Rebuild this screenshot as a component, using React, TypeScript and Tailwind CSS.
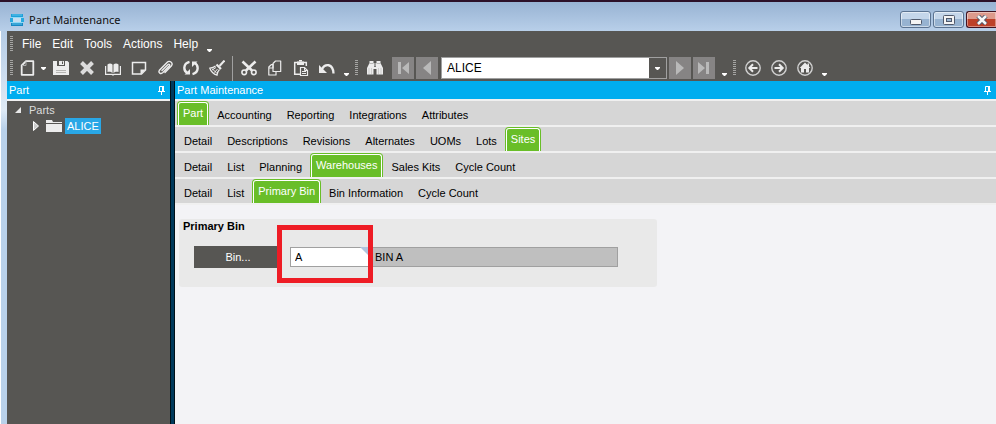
import type { ReactNode } from 'react'
import clsx from 'clsx'

const tabRows = [
	{
		label: 'Part sections',
		tabs: ['Part', 'Accounting', 'Reporting', 'Integrations', 'Attributes'],
		active: 'Part',
	},
	{
		label: 'Part views',
		tabs: ['Detail', 'Descriptions', 'Revisions', 'Alternates', 'UOMs', 'Lots', 'Sites'],
		active: 'Sites',
	},
	{
		label: 'Site views',
		tabs: ['Detail', 'List', 'Planning', 'Warehouses', 'Sales Kits', 'Cycle Count'],
		active: 'Warehouses',
	},
	{
		label: 'Warehouse views',
		tabs: ['Detail', 'List', 'Primary Bin', 'Bin Information', 'Cycle Count'],
		active: 'Primary Bin',
	},
]

const menus = ['File', 'Edit', 'Tools', 'Actions', 'Help']

function Icon({ children }: { children: ReactNode }) {
	return (
		<svg width="16" height="16" viewBox="0 0 16 16" fill="none" stroke="#ececec" strokeWidth="1.5" aria-hidden="true">
			{children}
		</svg>
	)
}

const icons = {
	new: (
		<Icon>
			<path d="M6 1.200h7.300v13.600H1.700V5.500L6 1.200z" strokeLinejoin="round" strokeWidth="1.800" />
			<path d="M2 5.500h4V1.500" strokeWidth="1" stroke="#aaa" />
		</Icon>
	),
	save: (
		<Icon>
			<path d="M0 1h4v5h8V1h2.500L16 2.500V15H0z" fill="#ececec" stroke="none" />
			<path d="M6 1h5v4H6z" fill="#ececec" stroke="none" />
			<path d="M9.500 1.500v2.500" stroke="#575653" strokeWidth="1" />
			<path d="M3 10.500h10M3 12.500h10" stroke="#b5b5b3" strokeWidth="1" />
		</Icon>
	),
	delete: (
		<Icon>
			<path d="M2.500 2.500l11 11M13.500 2.500l-11 11" stroke="#dcdcdc" strokeWidth="4" />
		</Icon>
	),
	book: (
		<Icon>
			<path d="M2.500 12V4.500C4 3 6 3 7.500 4.500V13C6 11.500 4 11.500 2.500 12z" fill="#ececec" stroke="none" />
			<path d="M13.500 12V4.500C12 3 10 3 8.500 4.500V13c1.500-1.500 3.500-1.500 5-1z" fill="#ececec" stroke="none" />
			<path d="M.6 6v8.400h6.400l1 .6 1-.6h6.400V6" strokeWidth="1.200" />
			<path d="M8 5v8.500" stroke="#b5b5b3" strokeWidth=".8" />
		</Icon>
	),
	note: (
		<Icon>
			<path d="M1.500 2.500h13v7.500l-4 4h-9z" />
			<path d="M14.500 9.500l-5 5v-5z" fill="#ececec" stroke="none" />
		</Icon>
	),
	clip: (
		<Icon>
			<path
				d="M5 10.500L11 4.500c1-.9 2.300.2 1.400 1.300l-6.500 6.800c-2 2-5 .2-3.500-2.300L10 2.400c2.500-2.400 6.500.2 4.500 3.300L8 12.500"
				strokeWidth="1.400"
				strokeLinecap="round"
			/>
		</Icon>
	),
	refresh: (
		<Icon>
			<path d="M6.500 1.800C-.2 3.500.2 11 4.500 13M9.500 14.200c6.700-1.700 6.300-9.200 2-11.200" strokeWidth="2.400" />
			<path d="M1.500 14.500h5.500V9zM14.500 1.500H9V7z" fill="#ececec" stroke="none" />
		</Icon>
	),
	broom: (
		<Icon>
			<path d="M15.500.5L10.500 6" strokeWidth="2" />
			<path d="M7.500 4.500l4.500 4.500" strokeWidth="2.200" />
			<path d="M6.500 6C5 7.500 3 8 .8 8.200 2 11.500 4.500 14 8 15.200c0-2.200 1-4.200 2.500-5.700" strokeWidth="1.200" />
			<path d="M7 7.500L3 10M8.500 9L5.500 12.500M3 8.500l5 5" strokeWidth="1" />
		</Icon>
	),
	cut: (
		<Icon>
			<path d="M1.500 1.500l9.500 9M14.500 1.500L5 10.500" strokeWidth="2.600" />
			<circle cx="3.200" cy="12.300" r="2.300" strokeWidth="1.600" />
			<circle cx="12.800" cy="12.300" r="2.300" strokeWidth="1.600" />
		</Icon>
	),
	copy: (
		<Icon>
			<path d="M8.500 1h5.200v10.500H6V3.500z" strokeWidth="1.200" strokeLinejoin="round" />
			<path d="M6 4.500H4.500L1.800 7v8H9v-3.500M6 4v4H2" strokeWidth="1.200" strokeLinejoin="round" />
		</Icon>
	),
	paste: (
		<Icon>
			<path d="M7 14.300H1.700V2.500h11.600V6" strokeWidth="1.500" />
			<path d="M4 1.500h7v3.500H4z" fill="#ececec" stroke="none" />
			<path d="M6 .7h3" />
			<path d="M7.500 7.500h4l3 3v5h-7z" strokeWidth="1.200" />
			<path d="M9 11.500h4M9 13.500h4M11.500 7.500v3h3" strokeWidth="1" />
		</Icon>
	),
	undo: (
		<Icon>
			<path d="M3 9C6 3.500 14 3 14.500 13.500" strokeWidth="2.300" />
			<path d="M0 5v8h8z" fill="#ececec" stroke="none" />
		</Icon>
	),
	search: (
		<Icon>
			<path d="M2.500 1h4v2h1v3h1V3h1V1h4v2l2.500 5v6.500H9.500V9h-3v5.500H0V8l2.500-5z" fill="#ececec" stroke="none" />
			<path d="M2.500 3.500h4M9.500 3.500h4" stroke="#aaa" strokeWidth=".8" />
			<path d="M2 8v6M4.500 8v6M11.500 8v6M14 8v6" stroke="#c2c2c0" strokeWidth=".7" />
			<path d="M7 6.500h2" stroke="#777" strokeWidth="1" />
		</Icon>
	),
	back: (
		<Icon>
			<circle cx="8" cy="8" r="7.200" stroke="#d0d0d0" strokeWidth="1.400" />
			<path d="M12.500 8H5M8 4.300L4.300 8 8 11.700" strokeWidth="2" />
		</Icon>
	),
	forward: (
		<Icon>
			<circle cx="8" cy="8" r="7.200" stroke="#d0d0d0" strokeWidth="1.400" />
			<path d="M3.500 8H11M8 4.300L11.700 8 8 11.700" strokeWidth="2" />
		</Icon>
	),
	home: (
		<Icon>
			<circle cx="8" cy="8" r="7.200" stroke="#d0d0d0" strokeWidth="1.400" />
			<path d="M8 2.500L2.700 8H4v4.500h3V9h2v3.500h3V8h1.300L12 6.500V3.500h-1.500V5z" fill="#ececec" stroke="none" />
		</Icon>
	),
}

function Grip() {
	return (
		<svg width="3" height="16" viewBox="0 0 3 16" className="shrink-0" aria-hidden="true">
			<path d="M1.500 0v16" stroke="#a5a5a3" strokeWidth="3" strokeDasharray="1 1" />
		</svg>
	)
}

function Caret() {
	return (
		<svg width="5" height="3" viewBox="0 0 5 3" className="shrink-0" aria-hidden="true">
			<path d="M0 0h5v1L3 3H2L0 1z" fill="#fff" />
		</svg>
	)
}

// Small arrow at the end of a bar that opens its overflow menu
function MoreButton({ label }: { label: string }) {
	return (
		<button type="button" aria-label={label} className="flex h-full w-3 shrink-0 items-end justify-center pb-1">
			<Caret />
		</button>
	)
}

function ToolButton({ label, icon }: { label: string; icon: ReactNode }) {
	return (
		<button
			type="button"
			aria-label={label}
			className="flex h-6 w-[26px] shrink-0 items-center justify-center hover:bg-white/10"
		>
			{icon}
		</button>
	)
}

function NavButton({ label, path }: { label: string; path: string }) {
	return (
		<button
			type="button"
			aria-label={label}
			disabled
			className="flex size-[22px] shrink-0 items-center justify-center bg-[#868484]"
		>
			<svg width="14" height="14" viewBox="0 0 14 14" fill="#b9b9b9" aria-hidden="true">
				<path d={path} />
			</svg>
		</button>
	)
}

function PaneHeader({ title }: { title: string }) {
	return (
		<div className="flex h-5 items-center justify-between border-b-2 border-[#f0f0f0] bg-[#00adef] pl-0.5 text-[11px] text-white">
			<h2>{title}</h2>
			<button type="button" aria-label={`Pin ${title}`} className="flex h-full w-4 items-center pl-1">
				<svg width="7" height="9" viewBox="0 0 7 9" fill="none" stroke="#fff" aria-hidden="true">
					<path d="M1.500 5V.5h3V5M0 5.500h7M3.500 6v3" />
					<path d="M5 0v5" strokeWidth="2" />
				</svg>
			</button>
		</div>
	)
}

function TitleBar() {
	const frame =
		'flex h-[17px] w-[31px] items-center justify-center rounded-[3px] border border-[#5b7391] bg-linear-to-b from-[#c4d6ea] from-50% to-[#97b3d1] to-50% inset-ring inset-ring-white/50'
	return (
		<header className="flex h-[31px] items-start justify-between border-t-2 border-[#2c1028] bg-linear-to-b from-[#98b3d3] to-[#b8cfe9]">
			<div className="flex items-center gap-1 pt-[10px] pl-[9px]">
				<svg width="16" height="16" viewBox="0 0 16 16" aria-hidden="true">
					<path d="M2 2h12v3H2z" fill="#1f9fd8" />
					<path d="M2 5h12v1H2z" fill="#8ed8f5" />
					<path d="M1 6h3v4H1zM12 6h3v4h-3z" fill="#27a9df" />
					<path d="M4 6h8v4H4z" fill="#c5ddf0" />
					<path d="M2 10h12v1H2z" fill="#8ed8f5" />
					<path d="M2 11h12v3H2z" fill="#1787c2" />
					<path d="M3 3h10M3 12h10" stroke="#5fc4ec" />
				</svg>
				<h1 className="font-['Noto_Sans','Open_Sans',sans-serif] text-[11px] leading-4 text-[#101010]">
					Part Maintenance
				</h1>
			</div>
			<div className="flex gap-0.5 pt-[9px]">
				<button type="button" aria-label="Minimize" className={frame}>
					<svg width="12" height="6" viewBox="0 0 12 6" className="mt-1" aria-hidden="true">
						<rect x=".5" y=".5" width="11" height="5" rx="1" fill="#f4f4f4" stroke="#50596b" />
					</svg>
				</button>
				<button type="button" aria-label="Maximize" className={frame}>
					<svg width="12" height="10" viewBox="0 0 12 10" aria-hidden="true">
						<rect x=".5" y=".5" width="11" height="9" rx="1" fill="#f4f4f4" stroke="#50596b" />
						<rect x="3.500" y="3.500" width="5" height="3" fill="#9db8d4" stroke="#50596b" />
					</svg>
				</button>
				<button
					type="button"
					aria-label="Close"
					className="flex h-[17px] w-[30px] items-center justify-center rounded-l-[3px] border border-r-0 border-[#431422] bg-linear-to-b from-[#dd9a8c] from-50% to-[#bd4029] to-50% inset-ring inset-ring-white/40"
				>
					<svg width="12" height="10" viewBox="0 0 12 10" aria-hidden="true">
						<path d="M2 1l8 8M10 1L2 9" stroke="#50596b" strokeWidth="4.500" />
						<path d="M2 1l8 8M10 1L2 9" stroke="#f8f8f8" strokeWidth="2.500" />
					</svg>
				</button>
			</div>
		</header>
	)
}

function MenuBar() {
	return (
		<nav className="flex h-[25px] items-center pl-[3px] text-[12px] text-white">
			<Grip />
			<div className="ml-1 flex gap-px">
				{menus.map((menu) => (
					<button key={menu} type="button" className="px-[5px] hover:bg-white/10">
						{menu}
					</button>
				))}
			</div>
			<MoreButton label="Menu options" />
		</nav>
	)
}

function ToolBar() {
	return (
		<div role="toolbar" aria-label="Standard" className="flex h-[25px] items-start pl-[3px]">
			<div className="flex h-6 items-center">
				<Grip />
			</div>
			<div className="ml-0.5 flex items-center">
				<ToolButton label="New" icon={icons.new} />
				<button type="button" aria-label="New options" className="flex h-6 w-[7px] items-center">
					<Caret />
				</button>
				<ToolButton label="Save" icon={icons.save} />
				<ToolButton label="Delete" icon={icons.delete} />
				<ToolButton label="Book" icon={icons.book} />
				<ToolButton label="Memo" icon={icons.note} />
				<ToolButton label="Attachments" icon={icons.clip} />
				<ToolButton label="Refresh" icon={icons.refresh} />
				<ToolButton label="Clear" icon={icons.broom} />
			</div>
			<div className="ml-0.5 h-full w-px bg-[#a0a0a0]" />
			<div className="ml-[3px] flex h-6 items-center">
				<ToolButton label="Cut" icon={icons.cut} />
				<ToolButton label="Copy" icon={icons.copy} />
				<ToolButton label="Paste" icon={icons.paste} />
				<ToolButton label="Undo" icon={icons.undo} />
				<MoreButton label="Edit options" />
			</div>
			<div className="ml-[3px] flex h-6 items-center gap-1">
				<Grip />
				<ToolButton label="Search" icon={icons.search} />
				<div className="flex gap-0.5">
					<NavButton label="First" path="M2 1h3v12H2zM13 1v12L6 7z" />
					<NavButton label="Previous" path="M11 0v14L3 7z" />
					<div className="relative ml-px h-[22px] w-[226px]">
						<select
							aria-label="Part"
							defaultValue="ALICE"
							className="block h-[22px] w-full appearance-none border border-[#a0a0a0] bg-white py-0 pl-[5px] text-[12px] leading-5 text-black"
						>
							<option>ALICE</option>
						</select>
						<span className="pointer-events-none absolute inset-y-px right-px flex w-[17px] items-center justify-center bg-[#575653]">
							<Caret />
						</span>
					</div>
					<NavButton label="Next" path="M3 0v14l8-7z" />
					<NavButton label="Last" path="M9 1h3v12H9zM1 1v12l7-6z" />
				</div>
			</div>
			<div className="ml-[3px] flex h-6 items-center">
				<MoreButton label="Navigation options" />
			</div>
			<div className="ml-[3px] flex h-6 items-center gap-1">
				<Grip />
				<div className="flex h-full items-center">
					<ToolButton label="Back" icon={icons.back} />
					<ToolButton label="Forward" icon={icons.forward} />
					<ToolButton label="Home" icon={icons.home} />
					<MoreButton label="Home options" />
				</div>
			</div>
		</div>
	)
}

function PartTree() {
	return (
		<aside className="w-[163px] shrink-0">
			<PaneHeader title="Part" />
			<ul className="pt-px pl-2 text-[11px] leading-4 text-[#dcdcdc]">
				<li>
					<div className="flex items-center gap-2">
						<svg width="6" height="6" viewBox="0 0 6 6" aria-hidden="true">
							<path d="M6 0v6H0z" fill="#e8e8e8" />
						</svg>
						Parts
					</div>
					<ul className="pl-[18px]">
						<li className="flex items-center">
							<svg width="6" height="10" viewBox="0 0 6 10" aria-hidden="true">
								<path d="M.5.5v9L5.500 5z" fill="#ccc" stroke="#fff" />
							</svg>
							<svg width="16" height="12" viewBox="0 0 16 12" className="mr-[3px] ml-[7px]" aria-hidden="true">
								<path d="M0 0h6l1 2h9v1H0zM0 4h16v8H0z" fill="#ececec" />
							</svg>
							<button type="button" className="bg-[#29a7e6] px-0.5 text-white">
								ALICE
							</button>
						</li>
					</ul>
				</li>
			</ul>
		</aside>
	)
}

function TabRow({ label, tabs, active }: { label: string; tabs: string[]; active: string }) {
	return (
		<div
			role="tablist"
			aria-label={label}
			className="flex h-[26px] gap-px border-b-2 border-[#f0f0f0] bg-[#d6d6d6] pl-0.5 text-[11px]"
		>
			{tabs.map((tab) => (
				<button
					key={tab}
					type="button"
					role="tab"
					aria-selected={tab === active}
					className={clsx(
						'whitespace-nowrap',
						tab === active
							? 'rounded-t-[4px] bg-[#69be28] px-px pt-px text-white'
							: 'px-[7px] pt-1 text-black',
					)}
				>
					{tab === active ? (
						<span className="flex h-full items-center rounded-t-[3px] border border-b-0 border-white px-1 pb-0.5">
							{tab}
						</span>
					) : (
						tab
					)}
				</button>
			))}
		</div>
	)
}

function PrimaryBin() {
	return (
		<section className="m-3.5 ml-1 h-[68px] w-full max-w-[478px] rounded-[3px] bg-[#e9e9e9] text-[11px] text-black">
			<h3 className="pl-1 leading-[15px] font-bold">Primary Bin</h3>
			<div className="mt-3 flex items-center pl-[15px]">
				<button type="button" className="h-[22px] w-[88px] bg-[#575653] text-white">
					Bin...
				</button>
				<div className="relative ml-2">
					<input
						aria-label="Bin"
						defaultValue="A"
						className="block h-5 w-20 border border-[#a0a0a0] bg-white px-1 outline-none"
					/>
					<svg width="8" height="8" viewBox="0 0 8 8" className="absolute top-0 right-0.5" aria-hidden="true">
						<path d="M0 0h8v8z" fill="#b0c4de" />
					</svg>
					<div className="pointer-events-none absolute -top-[22px] -right-[3px] -bottom-4 -left-[13px] border-5 border-[#ee1c25]" />
				</div>
				<input
					aria-label="Bin description"
					readOnly
					value="BIN A"
					className="h-5 w-[248px] border border-[#a0a0a0] bg-[#bfbfbf] px-1 outline-none"
				/>
			</div>
		</section>
	)
}

export default function App() {
	return (
		<div className="flex min-h-screen flex-col overflow-hidden bg-[#b9d1ea] font-['Liberation_Sans',Arial,sans-serif]">
			<TitleBar />
			<div className="flex grow border-l border-white bg-linear-to-b from-[#b5cce6] via-[#dfeaf5] via-20% to-[#b9d1ea] to-25% pl-1.5">
				<div className="flex min-w-0 grow flex-col bg-[#575653]">
					<MenuBar />
					<ToolBar />
					<div className="flex grow">
						<PartTree />
						<div className="w-[5px] shrink-0 border-x border-[#001018] bg-[#003a5c]" />
						<main className="min-w-0 grow bg-[#f3f3f6]">
							<PaneHeader title="Part Maintenance" />
							{tabRows.map((row) => (
								<TabRow key={row.label} {...row} />
							))}
							<PrimaryBin />
						</main>
					</div>
				</div>
			</div>
		</div>
	)
}
